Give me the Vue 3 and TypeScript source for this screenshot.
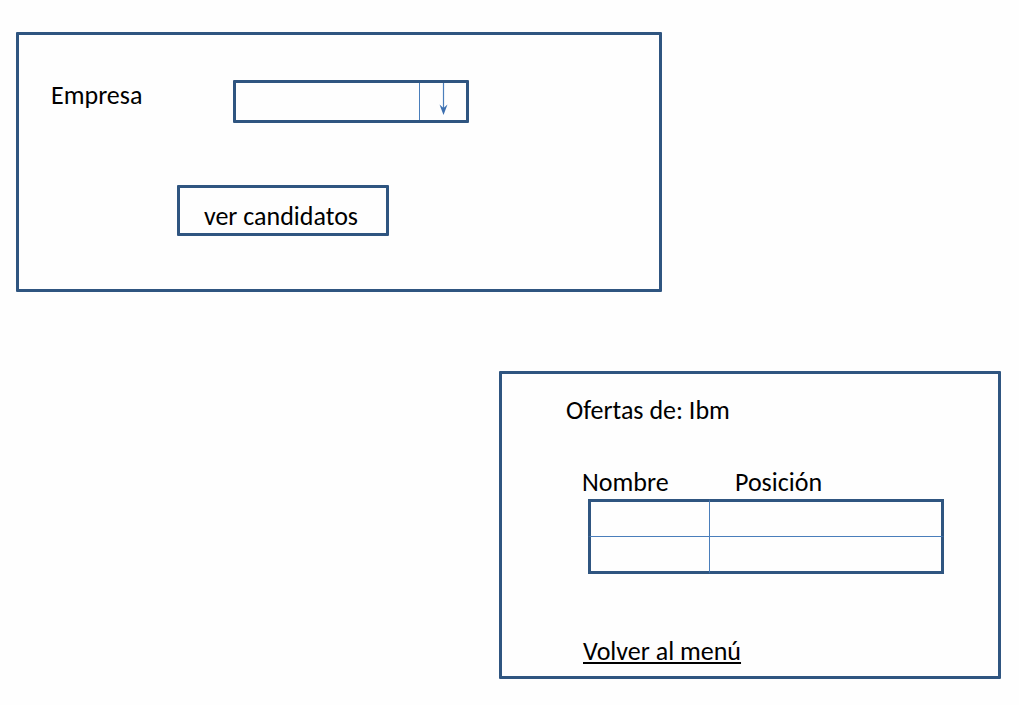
<script setup lang="ts">
import { ref } from 'vue'

interface Offer {
  name: string
  position: string
}

const company = ref<string>('')
const companies: string[] = []
const offers: Offer[] = [
  { name: '', position: '' },
  { name: '', position: '' },
]
</script>

<template>
  <main class="page">
    <form class="panel search" @submit.prevent>
      <div class="field">
        <label for="company">Empresa</label>
        <div class="picker">
          <select id="company" v-model="company">
            <option v-for="item in companies" :key="item" :value="item">{{ item }}</option>
          </select>
          <span class="toggle" aria-hidden="true">
            <svg width="10" height="32" viewBox="0 0 10 32">
              <path d="M5.5 0V26" fill="none" stroke="#4a7ebb" stroke-width="1.2" />
              <path d="M1.5 21.5L5.5 32L9.5 21.5L5.5 25Z" fill="#3d70b0" />
            </svg>
          </span>
        </div>
      </div>
      <button type="submit">ver candidatos</button>
    </form>

    <section class="panel results">
      <h1>Ofertas de: Ibm</h1>
      <table>
        <thead>
          <tr>
            <th class="name" scope="col">Nombre</th>
            <th class="position" scope="col">Posición</th>
          </tr>
        </thead>
        <tbody>
          <tr v-for="(offer, index) in offers" :key="index">
            <td>{{ offer.name }}</td>
            <td>{{ offer.position }}</td>
          </tr>
        </tbody>
      </table>
      <a href="#">Volver al menú</a>
    </section>
  </main>
</template>

<style>
body {
  margin: 0;
  background: #fefefe;
}
</style>

<style scoped>
.page {
  display: grid;
  grid-template-columns: 483fr 163fr 339fr;
  row-gap: 79px;
  padding: 32px 18px 26px 16px;
  color: #000;
  font: 26px/30px Carlito, Calibri, Lato, sans-serif;
}

.panel {
  box-sizing: border-box;
  border: 3px solid #2f5580;
  border-radius: 1px;
}

.search {
  grid-column: 1 / 3;
  display: flex;
  flex-direction: column;
  align-items: flex-start;
  gap: 62px;
  padding: 45px 32px 53px;
}

.field {
  display: grid;
  grid-template-columns: 182px 236px;
}

.picker {
  display: grid;
  grid-template-columns: 1fr 50px;
}

select {
  grid-area: 1 / 1 / 2 / 3;
  box-sizing: border-box;
  width: 100%;
  height: 43px;
  padding: 0 56px 0 8px;
  border: 3px solid #2f5580;
  border-radius: 1px;
  background: transparent;
  color: inherit;
  font: inherit;
  appearance: none;
}

.toggle {
  grid-area: 1 / 2;
  display: flex;
  justify-content: center;
  margin: 3px 3px 3px 0;
  border-left: 1px solid #4a7ebb;
  pointer-events: none;
}

button {
  box-sizing: border-box;
  width: 212px;
  margin-left: 126px;
  padding: 13px 4px 2px 0;
  border: 3px solid #2f5580;
  border-radius: 1px;
  background: transparent;
  color: inherit;
  font: inherit;
  cursor: pointer;
}

.results {
  grid-column: 2 / 4;
  padding: 21px 54px 10px 86px;
}

h1 {
  margin: 0 0 42px -22px;
  font-size: inherit;
  font-weight: 400;
}

table {
  width: 100%;
  margin-bottom: 62px;
  border-spacing: 0;
  table-layout: fixed;
}

th {
  padding: 0 0 2px;
  font-weight: 400;
  text-align: left;
}

.name {
  width: 122px;
  text-indent: -6px;
}

.position {
  padding-left: 25px;
}

td {
  height: 34px;
  padding: 0;
  border: 0 solid #2f5580;
}

td:first-child {
  border-left-width: 3px;
  border-right: 1px solid #4a7ebb;
}

td:last-child {
  border-right-width: 3px;
}

tbody tr:first-child td {
  border-top-width: 3px;
}

tbody tr:last-child td {
  border-bottom-width: 3px;
}

tbody tr:not(:last-child) td {
  border-bottom: 1px solid #4a7ebb;
}

a {
  display: table;
  margin-left: -5px;
  color: inherit;
  text-decoration: underline;
  text-decoration-thickness: 2px;
  text-underline-offset: 2px;
  text-decoration-skip-ink: none;
}
</style>
